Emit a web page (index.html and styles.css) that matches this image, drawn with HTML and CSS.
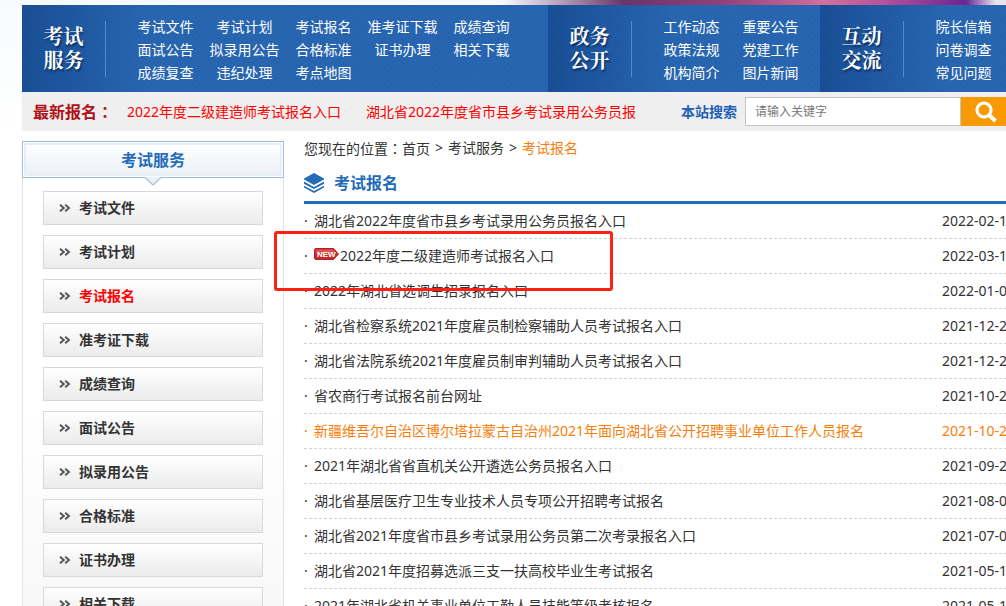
FILE: index.html
```html
<!DOCTYPE html>
<html lang="zh-CN">
<head>
<meta charset="utf-8">
<title>考试报名</title>
<link rel="stylesheet" href="styles.css">
</head>
<body>
<svg class="defs" width="0" height="0" aria-hidden="true">
  <symbol id="chevrons" viewBox="0 0 12 8"><path d="M1 .7L4.800 4 1 7.300M6.200.7L10 4 6.200 7.300" fill="none" stroke="#555" stroke-width="1.900"/></symbol>
</svg>
<div class="banner"></div>
<div class="page">
  <nav class="topnav">
    <section class="group group-exam">
      <h2 class="group-title">考试<br>服务</h2>
      <div class="group-links cols-5">
        <a href="#">考试文件</a><a href="#">考试计划</a><a href="#">考试报名</a><a href="#">准考证下载</a><a href="#">成绩查询</a>
        <a href="#">面试公告</a><a href="#">拟录用公告</a><a href="#">合格标准</a><a href="#">证书办理</a><a href="#">相关下载</a>
        <a href="#">成绩复查</a><a href="#">违纪处理</a><a href="#">考点地图</a>
      </div>
    </section>
    <section class="group group-affairs">
      <h2 class="group-title">政务<br>公开</h2>
      <div class="group-links cols-2">
        <a href="#">工作动态</a><a href="#">重要公告</a>
        <a href="#">政策法规</a><a href="#">党建工作</a>
        <a href="#">机构简介</a><a href="#">图片新闻</a>
      </div>
    </section>
    <section class="group group-contact">
      <h2 class="group-title">互动<br>交流</h2>
      <div class="group-links cols-1">
        <a href="#">院长信箱</a>
        <a href="#">问卷调查</a>
        <a href="#">常见问题</a>
      </div>
    </section>
  </nav>

  <div class="newsbar">
    <strong class="news-label">最新报名<span class="colon" lang="zh-TW">：</span></strong>
    <a class="news-link" href="#">2022年度二级建造师考试报名入口</a>
    <a class="news-link" href="#">湖北省2022年度省市县乡考试录用公务员报</a>
    <form class="search">
      <label class="search-label" for="q">本站搜索</label>
      <input class="search-input" id="q" type="text" placeholder="请输入关键字">
      <button class="search-button" type="button" aria-label="搜索">
        <svg width="24" height="24" viewBox="0 0 24 24"><circle cx="10" cy="10" r="7" fill="none" stroke="#fff" stroke-width="3.200"/><path d="M15 15l6.500 6" stroke="#fff" stroke-width="4"/></svg>
      </button>
    </form>
  </div>

  <div class="columns">
    <aside class="sidebar">
      <h2 class="side-title">考试服务
        <svg class="side-notch" width="18" height="9" viewBox="0 0 18 9"><path d="M1 0h16L9 8z" fill="#e9f0f7"/><path d="M1 .5L9 8l8-7.500" fill="none" stroke="#a9c7e8" stroke-width="1.300"/></svg>
      </h2>
      <ul class="side-menu">
        <li><a href="#"><svg class="chev"><use href="#chevrons"/></svg>考试文件</a></li>
        <li><a href="#"><svg class="chev"><use href="#chevrons"/></svg>考试计划</a></li>
        <li><a class="current" href="#"><svg class="chev"><use href="#chevrons"/></svg>考试报名</a></li>
        <li><a href="#"><svg class="chev"><use href="#chevrons"/></svg>准考证下载</a></li>
        <li><a href="#"><svg class="chev"><use href="#chevrons"/></svg>成绩查询</a></li>
        <li><a href="#"><svg class="chev"><use href="#chevrons"/></svg>面试公告</a></li>
        <li><a href="#"><svg class="chev"><use href="#chevrons"/></svg>拟录用公告</a></li>
        <li><a href="#"><svg class="chev"><use href="#chevrons"/></svg>合格标准</a></li>
        <li><a href="#"><svg class="chev"><use href="#chevrons"/></svg>证书办理</a></li>
        <li><a href="#"><svg class="chev"><use href="#chevrons"/></svg>相关下载</a></li>
      </ul>
    </aside>

    <main class="content">
      <div class="crumbs"><span>您现在的位置<span class="colon" lang="zh-TW">：</span><a href="#">首页</a></span><span>&gt;</span><a href="#">考试服务</a><span>&gt;</span><a class="here" href="#">考试报名</a></div>
      <h1 class="heading">
        <svg width="20" height="20" viewBox="0 0 20 20" fill="#246bb8"><path d="M10 0l10 5.500v1L10 12 0 6.500v-1z"/><path d="M0 8.600l10 5.500 10-5.500v2.100l-10 5.300-10-5.300z"/><path d="M0 12.700l10 5.300 10-5.300v1.900L10 20 0 14.600z"/></svg>
        考试报名
      </h1>
      <ul class="list">
        <li><a href="#">湖北省2022年度省市县乡考试录用公务员报名入口</a><time>2022-02-14</time></li>
        <li class="marked"><svg class="new" role="img" aria-label="NEW" width="25" height="12" viewBox="0 0 25 12"><path d="M2 .5h17.500l5 5.500-5 5.500H2Q.5 11.500.5 10V2Q.5.5 2 .5z" fill="#c62a2c" stroke="#b51d20"/><path d="M2 1.500h17l3.500 4H1.500z" fill="#dc5254"/><text x="3" y="9" class="new-text">NEW</text></svg><a href="#">2022年度二级建造师考试报名入口</a><time>2022-03-10</time></li>
        <li><a href="#">2022年湖北省选调生招录报名入口</a><time>2022-01-06</time></li>
        <li><a href="#">湖北省检察系统2021年度雇员制检察辅助人员考试报名入口</a><time>2021-12-20</time></li>
        <li><a href="#">湖北省法院系统2021年度雇员制审判辅助人员考试报名入口</a><time>2021-12-20</time></li>
        <li><a href="#">省农商行考试报名前台网址</a><time>2021-10-28</time></li>
        <li class="hot"><a href="#">新疆维吾尔自治区博尔塔拉蒙古自治州2021年面向湖北省公开招聘事业单位工作人员报名</a><time>2021-10-22</time></li>
        <li><a href="#">2021年湖北省省直机关公开遴选公务员报名入口</a><time>2021-09-26</time></li>
        <li><a href="#">湖北省基层医疗卫生专业技术人员专项公开招聘考试报名</a><time>2021-08-06</time></li>
        <li><a href="#">湖北省2021年度省市县乡考试录用公务员第二次考录报名入口</a><time>2021-07-08</time></li>
        <li><a href="#">湖北省2021年度招募选派三支一扶高校毕业生考试报名</a><time>2021-05-18</time></li>
        <li><a href="#">2021年湖北省机关事业单位工勤人员技能等级考核报名</a><time>2021-05-10</time></li>
      </ul>
    </main>
  </div>
</div>
</body>
</html>
```
FILE: styles.css
```css
*, *::before, *::after { box-sizing: border-box; }
html { overflow: hidden; }
body {
  margin: 0;
  overflow: hidden;
  background: linear-gradient(#f7fbfd, #fff 135px);
  color: #333;
  font: 14px/24px "Noto Sans", "Noto Sans CJK SC", sans-serif;
}
a { color: inherit; text-decoration: none; }
ul { list-style: none; margin: 0; padding: 0; }
h1, h2 { margin: 0; }
.defs { position: absolute; }
.colon { font-family: "Noto Sans CJK TC", sans-serif; line-height: 1; }

.banner {
  height: 5px;
  background: linear-gradient(90deg, #f4fafd 0, #f8fafc 50%, #c9bcd0 54%, #6c3468 62%, #93407c 72%, #d3709c 82%, #b5509c 88%, #6a2590 96%, #e9e3f1 99%);
}
.page { margin: 0 -16px 0 22px; background: #fff; }

.topnav { display: flex; height: 87px; color: #fff; }
.group {
  display: flex;
  align-items: center;
  background:
    linear-gradient(90deg, #0c3a7c88, #0c3a7c00 125px),
    url("data:image/svg+xml,%3Csvg xmlns='http://www.w3.org/2000/svg' xmlns:xlink='http://www.w3.org/1999/xlink' width='30' height='16'%3E%3Cdefs%3E%3Cg id='s' fill='%232866b1' stroke='%232562ac'%3E%3Ccircle r='15'/%3E%3Ccircle r='11'/%3E%3Ccircle r='7'/%3E%3Ccircle r='3'/%3E%3C/g%3E%3C/defs%3E%3Cuse xlink:href='%23s' x='0' y='0'/%3E%3Cuse xlink:href='%23s' x='30' y='0'/%3E%3Cuse xlink:href='%23s' x='15' y='8'/%3E%3Cuse xlink:href='%23s' x='0' y='16'/%3E%3Cuse xlink:href='%23s' x='30' y='16'/%3E%3Cuse xlink:href='%23s' x='15' y='24'/%3E%3Cuse xlink:href='%23s' x='0' y='32'/%3E%3Cuse xlink:href='%23s' x='30' y='32'/%3E%3C/svg%3E"),
    #2764af;
}
.group-exam { flex: 0 0 526px; }
.group-affairs { flex: 0 0 272px; }
.group-contact { flex: 1; }
.group-title {
  width: 84px;
  height: 56px;
  padding: 3px 0;
  border-right: 1px solid #4290dc;
  text-align: center;
  font: 700 20px/24px "Noto Serif CJK SC", "Noto Sans CJK SC", serif;
  text-shadow: 1px 2px 2px #0b2c5c;
}
.group-links {
  display: grid;
  grid-auto-rows: 23px;
  margin-left: 20px;
  line-height: 25px;
  text-align: center;
}
.cols-5 { grid-template-columns: repeat(5, 79px); }
.cols-2 { grid-template-columns: repeat(2, 79px); }
.cols-1 { grid-template-columns: 79px; }

.newsbar {
  display: flex;
  align-items: center;
  height: 39px;
  padding-left: 11px;
  background: #efefef;
}
.news-label { width: 94px; color: #b01116; font-size: 16px; }
.news-link { margin-right: 25px; color: #f00; white-space: nowrap; }
.search { display: flex; align-items: center; margin: 0 0 0 auto; }
.search-label { margin-right: 8px; color: #2161b5; font-weight: 700; }
.search-input {
  width: 216px;
  height: 29px;
  padding: 0 9px;
  border: 1px solid #c4c4c4;
  background: #fff;
  font: 12px "Noto Sans", "Noto Sans CJK SC", sans-serif;
}
.search-input::placeholder { color: #777; }
.search-button {
  display: flex;
  align-items: center;
  justify-content: center;
  width: 61px;
  height: 29px;
  padding: 0 12px 0 0;
  border: 0;
  background: #f79a03;
}

.columns { display: flex; gap: 20px; padding-top: 10px; }
.sidebar {
  flex: 0 0 262px;
  border: 1px solid #e2e2e2;
  border-top: 0;
  background: linear-gradient(#fff 55%, #f7f7f7);
}
.side-title {
  position: relative;
  height: 37px;
  margin: 0 -1px;
  border: 1px solid #98bce2;
  box-shadow: inset 0 0 0 1px #fff, inset 0 0 0 3px #e6eef6;
  background: linear-gradient(#fff, #eaf0f6);
  color: #246bb8;
  text-align: center;
  font-size: 16px;
  line-height: 36px;
}
.side-notch { position: absolute; left: 50%; top: 100%; margin-left: -9px; }
.side-menu { display: grid; gap: 10px; padding: 13px 20px; }
.side-menu a {
  display: flex;
  align-items: center;
  gap: 8px;
  height: 34px;
  padding-left: 15px;
  border: 1px solid #d9d9d9;
  background: linear-gradient(#fff, #ebebeb);
  font-weight: 700;
}
.side-menu .current { color: #f00; }
.chev { width: 12px; height: 8px; }

.content { flex: 1; min-width: 0; }
.crumbs { display: flex; gap: 5px; height: 14px; line-height: 14px; white-space: nowrap; }
.here { color: #f77e0b; }
.heading {
  display: flex;
  align-items: center;
  gap: 10px;
  height: 49px;
  padding-top: 10px;
  border-bottom: 3px solid #246bb8;
  color: #246bb8;
  font-size: 16px;
}
.list li {
  display: flex;
  align-items: center;
  height: 35px;
  border-bottom: 1px dashed #d2d2d2;
  white-space: nowrap;
}
.list li::before { content: "·"; width: 10px; }
.list time { margin-left: auto; padding-right: 7px; }
.list .hot { color: #f77e0b; }
.marked { position: relative; }
.marked::after {
  content: "";
  position: absolute;
  left: -30px;
  top: -8px;
  width: 339px;
  height: 60px;
  border: 3px solid #fe2012;
  border-radius: 3px;
}
.new { margin: 0 1px 4px 0; }
.new-text { fill: #fff; font: 700 8px "Liberation Sans", sans-serif; }
```
